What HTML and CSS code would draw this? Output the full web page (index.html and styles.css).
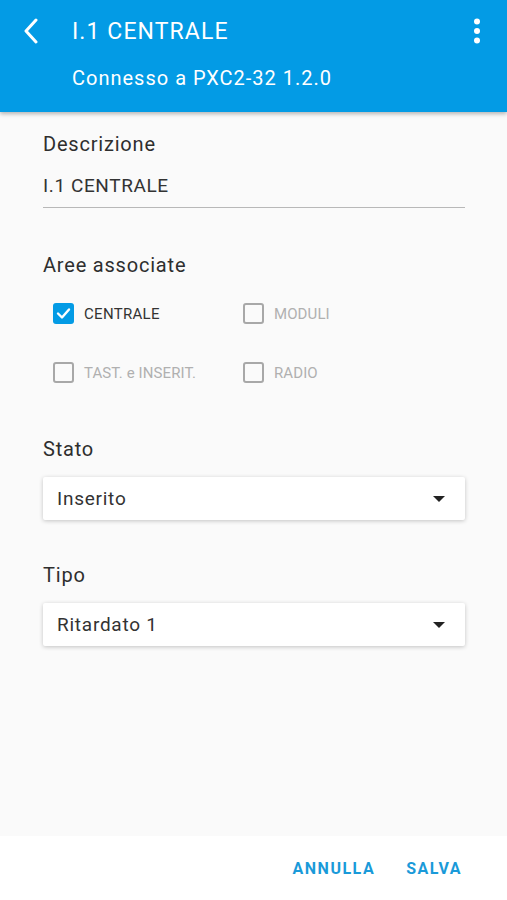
FILE: index.html
```html
<!DOCTYPE html>
<html lang="it">
<head>
<meta charset="utf-8">
<link rel="stylesheet" href="styles.css">
</head>
<body>
<div class="app">
  <header class="topbar">
    <div class="toprow">
      <svg class="back" width="18" height="26" viewBox="0 0 18 26"><path d="M14 2 L4 13 L14 24" fill="none" stroke="#fff" stroke-width="3" stroke-linecap="round" stroke-linejoin="round"/></svg>
      <h1 class="title">I.1 CENTRALE</h1>
      <svg class="kebab" width="8" height="26" viewBox="0 0 8 26"><circle cx="4" cy="3.5" r="3" fill="#fff"/><circle cx="4" cy="13" r="3" fill="#fff"/><circle cx="4" cy="22.5" r="3" fill="#fff"/></svg>
    </div>
    <div class="subtitle">Connesso a PXC2-32 1.2.0</div>
  </header>

  <main class="content">
    <section class="field">
      <div class="label">Descrizione</div>
      <div class="input">I.1 CENTRALE</div>
    </section>

    <section class="areas">
      <div class="label">Aree associate</div>
      <div class="checkgrid">
        <div class="check on"><span class="box"><svg width="21" height="21" viewBox="0 0 21 21"><path d="M5 10.5 L9 14.5 L16 6.5" fill="none" stroke="#fff" stroke-width="2.4" stroke-linecap="round" stroke-linejoin="round"/></svg></span><span class="ctext">CENTRALE</span></div>
        <div class="check"><span class="box"></span><span class="ctext">MODULI</span></div>
        <div class="check"><span class="box"></span><span class="ctext">TAST. e INSERIT.</span></div>
        <div class="check"><span class="box"></span><span class="ctext">RADIO</span></div>
      </div>
    </section>

    <section class="selfield">
      <div class="label">Stato</div>
      <div class="select"><span>Inserito</span><span class="caret"></span></div>
    </section>

    <section class="selfield tipo">
      <div class="label">Tipo</div>
      <div class="select"><span>Ritardato 1</span><span class="caret"></span></div>
    </section>
  </main>

  <footer class="actions">
    <span class="btn">ANNULLA</span>
    <span class="btn">SALVA</span>
  </footer>
</div>
</body>
</html>
```

FILE: styles.css
```css
* { box-sizing: border-box; }
html, body { margin: 0; padding: 0; }
body {
  font-family: Roboto, "Noto Sans", "Liberation Sans", sans-serif;
  background: #fafafa;
  color: #2b2b2b;
}
.app {
  width: 507px;
  height: 900px;
  display: flex;
  flex-direction: column;
  background: #fafafa;
}
.topbar {
  height: 112px;
  background: #039be5;
  color: #fff;
  box-shadow: 0 2px 4px rgba(0,0,0,0.28);
  position: relative;
  z-index: 1;
  flex: none;
}
.toprow {
  height: 62px;
  display: flex;
  align-items: center;
  padding: 0 26px 0 22px;
}
.back { flex: none; }
.title {
  margin: 0 0 0 32px;
  font-size: 23px;
  font-weight: 400;
  flex: 1;
  letter-spacing: 1.1px;
}
.kebab { flex: none; }
.subtitle {
  padding-left: 72px;
  font-size: 20px;
  line-height: 32px;
  letter-spacing: 1px;
}
.content {
  flex: 1;
  padding: 20px 42px 0 43px;
}
.label {
  font-size: 20px;
  line-height: 24px;
  color: #2e2e2e;
  letter-spacing: 0.8px;
}
.input {
  margin-top: 18px;
  font-size: 19px;
  line-height: 24px;
  padding-bottom: 9px;
  border-bottom: 1.5px solid #b8b8b8;
  color: #333;
  letter-spacing: 0.6px;
}
.areas { margin-top: 45px; }
.checkgrid {
  margin-top: 26px;
  display: grid;
  grid-template-columns: 190px 1fr;
  row-gap: 38px;
  padding-left: 10px;
}
.check {
  display: flex;
  align-items: center;
  height: 21px;
}
.box {
  width: 21px;
  height: 21px;
  border: 2px solid #a8a8a8;
  border-radius: 3px;
  flex: none;
  display: flex;
}
.check.on .box {
  background: #039be5;
  border: none;
}
.ctext {
  margin-left: 10px;
  font-size: 15px;
  color: #b0b0b0;
  letter-spacing: 0.1px;
}
.check.on .ctext { color: #333; letter-spacing: 0.3px; }
.selfield { margin-top: 54px; }
.tipo { margin-top: 43px; }
.select {
  margin-top: 16px;
  height: 43px;
  background: #fff;
  box-shadow: 0 1px 4px rgba(0,0,0,0.22);
  border-radius: 2px;
  display: flex;
  align-items: center;
  justify-content: space-between;
  padding: 0 20px 0 14px;
  font-size: 19px;
  color: #333;
  letter-spacing: 0.75px;
}
.caret {
  width: 0;
  height: 0;
  border-left: 6px solid transparent;
  border-right: 6px solid transparent;
  border-top: 6px solid #222;
}
.actions {
  flex: none;
  height: 64px;
  background: #fff;
  display: flex;
  justify-content: flex-end;
  align-items: center;
  gap: 31px;
  padding-right: 45px;
}
.btn {
  color: #1a9ad9;
  font-size: 16px;
  font-weight: 700;
  letter-spacing: 1.5px;
}
```
